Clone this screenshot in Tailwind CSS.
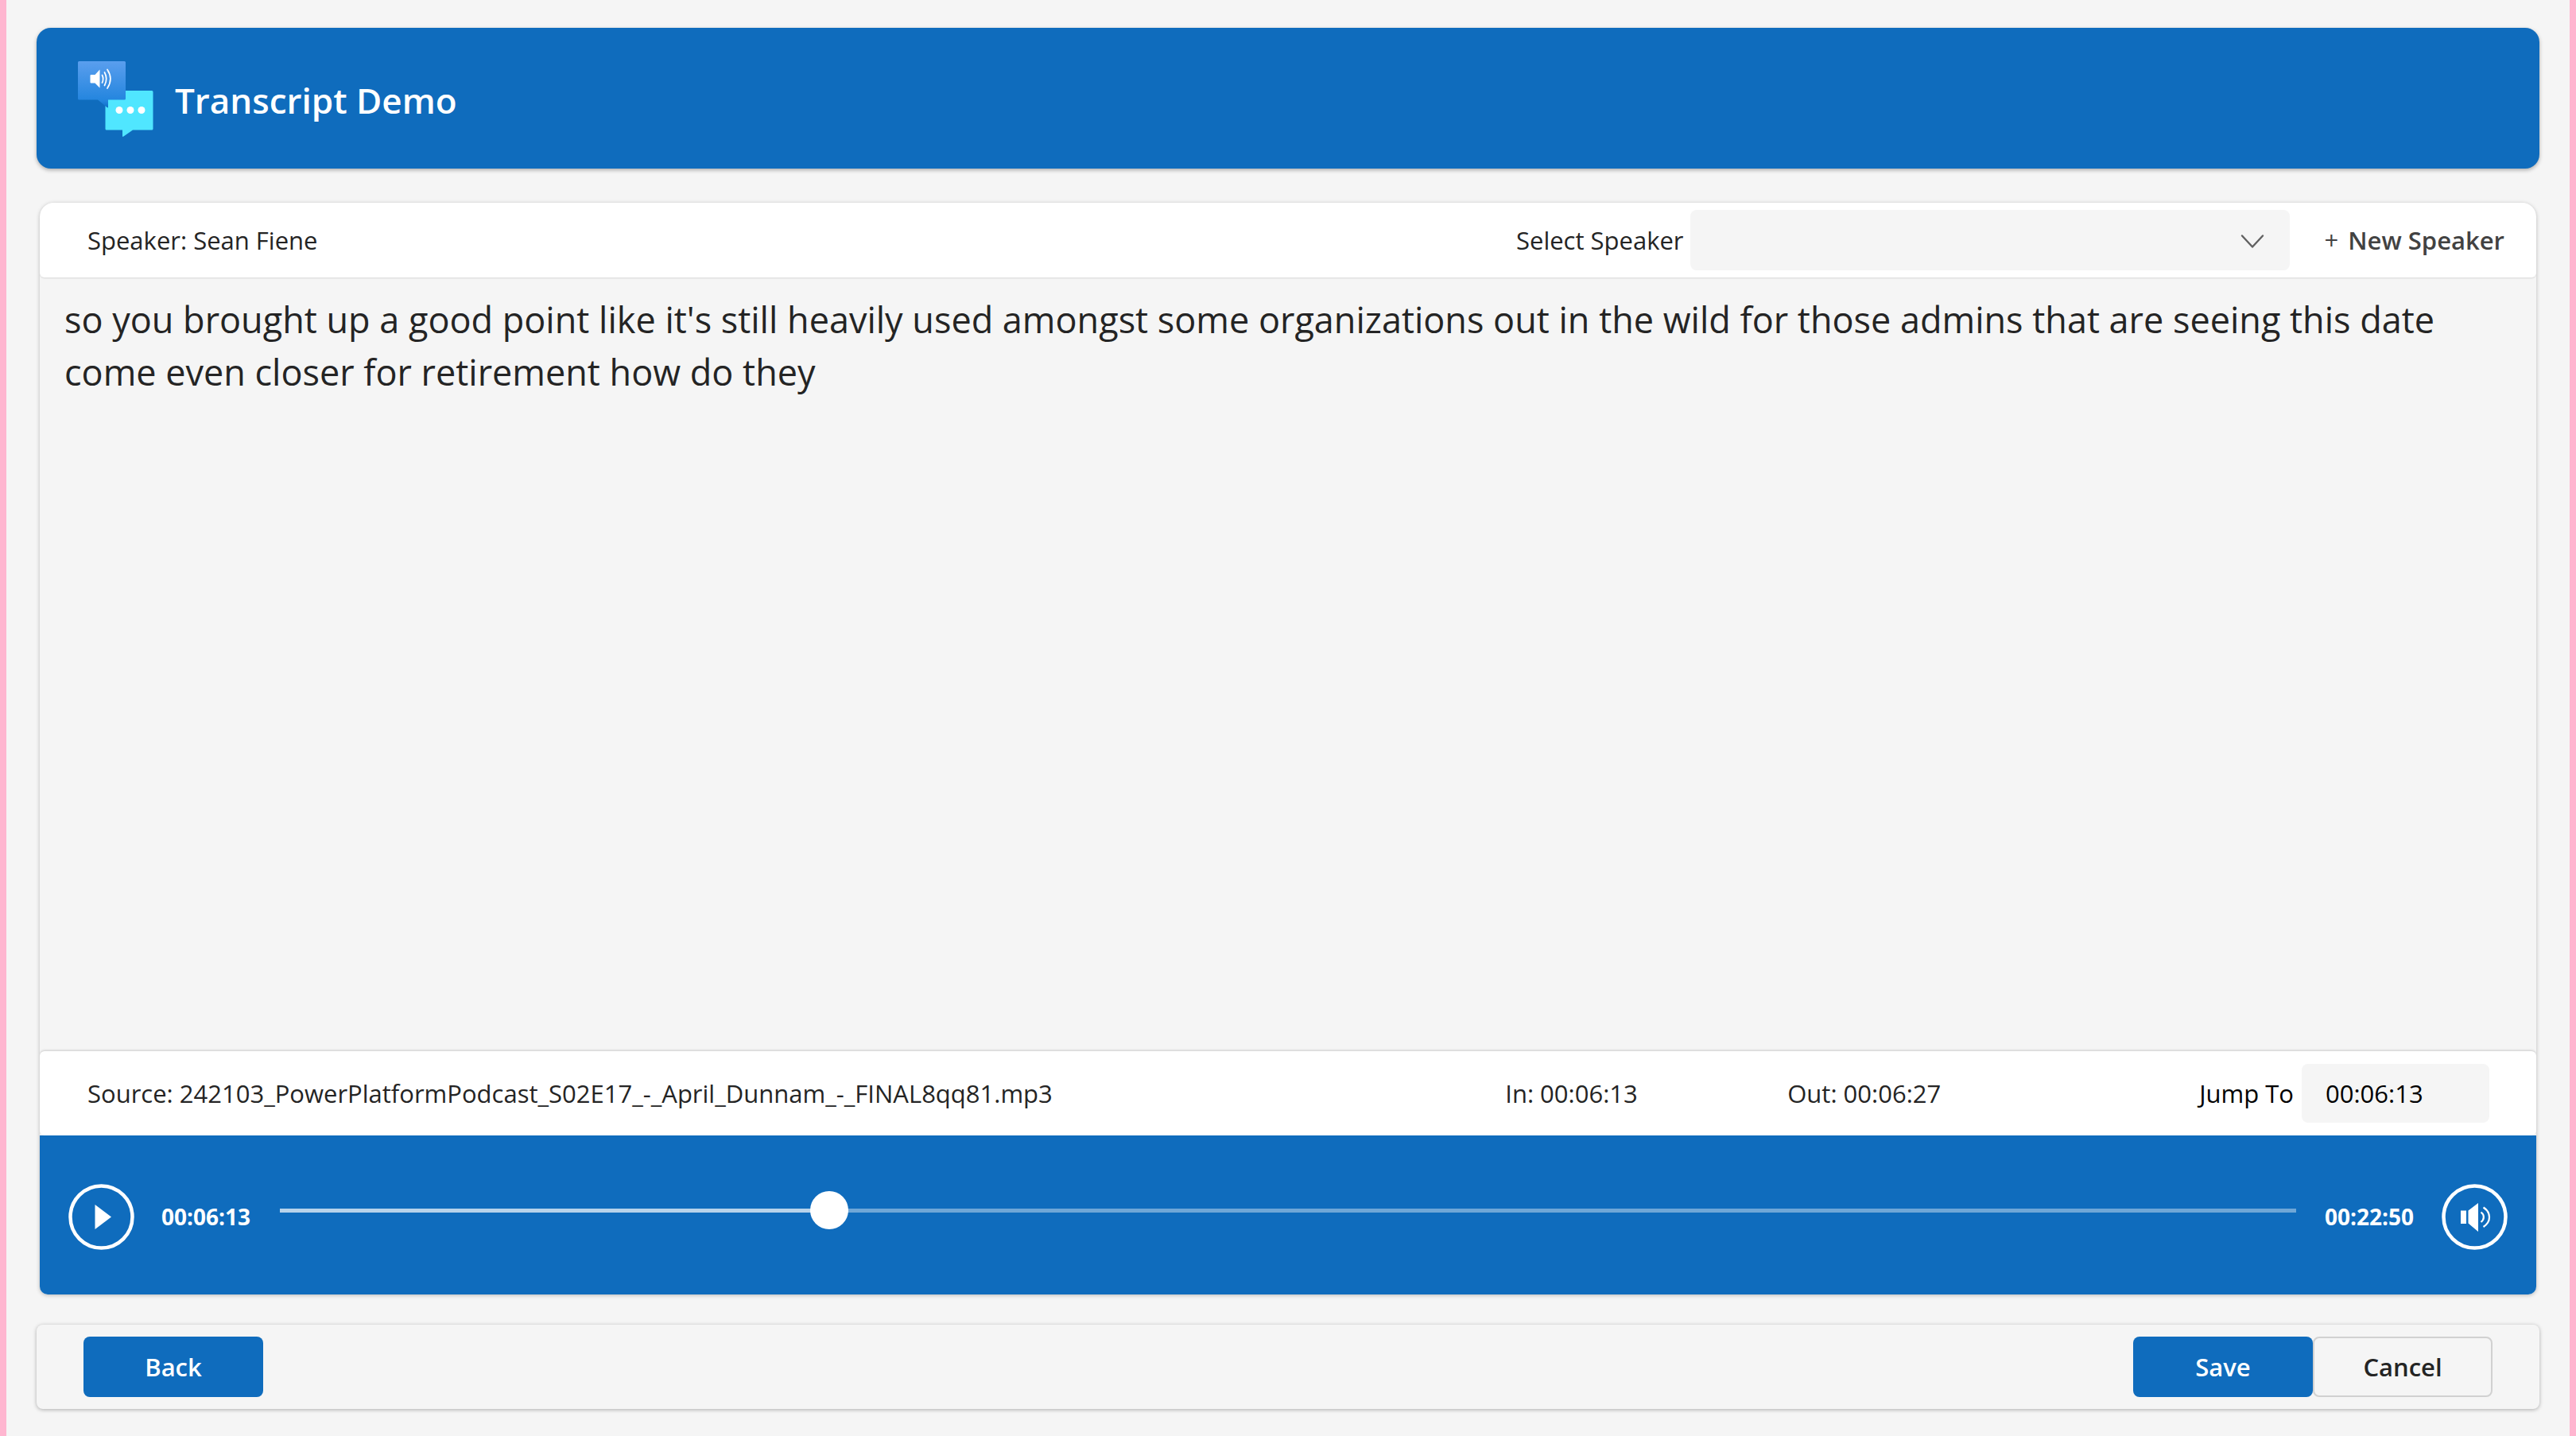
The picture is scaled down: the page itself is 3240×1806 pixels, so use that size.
<!DOCTYPE html>
<html lang="en">
<head>
<meta charset="utf-8">
<title>Transcript Demo</title>
<script src="https://cdn.jsdelivr.net/npm/@tailwindcss/browser@4"></script>
</head>
<body class="min-h-screen border-x-8 border-[#ffb6d0] bg-[#f5f5f5] font-['Open_Sans','Noto_Sans',sans-serif] text-[31px] leading-[40px] text-[#242424]">
<div class="flex min-h-screen flex-col px-[38px] pt-[35px] pb-[34px]">

  <header class="flex h-[177px] shrink-0 items-center gap-[26px] rounded-[18px] bg-[#0f6cbd] px-[52px] shadow-[0_2px_5px_rgba(0,0,0,0.3)]">
    <svg class="h-24 w-24 shrink-0" viewBox="0 0 96 96" aria-hidden="true">
      <defs>
        <linearGradient id="bubble" x1="0" y1="0" x2="0" y2="1">
          <stop offset="0" stop-color="#5a9eee"/>
          <stop offset="0.85" stop-color="#2385de"/>
          <stop offset="1" stop-color="#0f6fc8"/>
        </linearGradient>
      </defs>
      <path fill="#50e6ff" d="M36 38h57a1.500 1.500 0 0 1 1.500 1.500v46.500a1.500 1.500 0 0 1-1.500 1.500H69L57.500 95.500c-1 .8-1.500.5-1.500-.5v-7.500H36a1.500 1.500 0 0 1-1.500-1.500v-46.500a1.500 1.500 0 0 1 1.500-1.500z"/>
      <path fill="url(#bubble)" d="M1.500 1h57a1.500 1.500 0 0 1 1.500 1.500V48a1.500 1.500 0 0 1-1.500 1.500H38v9c0 1-.5 1.300-1.500.5L25 49.500H1.500A1.500 1.500 0 0 1 0 48V2.500A1.500 1.500 0 0 1 1.500 1z"/>
      <path fill="#fff" d="M16.500 18h5l6-6.500V34.500L21.500 28.500h-5a1 1 0 0 1-1-1V19a1 1 0 0 1 1-1z"/>
      <g fill="none" stroke="#fff" stroke-width="1.700" stroke-linecap="round">
        <path d="M30.500 18.500c1.500 3 1.500 6.500 0 9.500"/>
        <path d="M33.500 15c3 5.500 3 11 0 16.500"/>
        <path d="M37 11.500c5 7.500 5 16 0 23.500"/>
      </g>
      <circle cx="52" cy="62.500" r="4.500" fill="#fff"/>
      <circle cx="66" cy="62.500" r="4.500" fill="#fff"/>
      <circle cx="80" cy="62.500" r="4.500" fill="#fff"/>
    </svg>
    <h1 class="pt-1 text-[44px] leading-[60px] font-semibold text-white">Transcript Demo</h1>
  </header>

  <main class="mx-1 mt-[43px] flex flex-1 flex-col overflow-hidden rounded-t-[18px] rounded-b-[10px] shadow-[0_1px_5px_rgba(0,0,0,0.25)]">
    <section class="flex h-[94px] shrink-0 items-center rounded-b-md bg-white pr-10 pl-[60px] shadow-[0_1px_2px_rgba(0,0,0,0.12)]">
      <p class="flex-1">Speaker: Sean Fiene</p>
      <label for="speaker" class="mr-2">Select Speaker</label>
      <div class="relative w-[754px]">
        <select id="speaker" class="block h-[76px] w-full appearance-none rounded-lg bg-[#f5f5f5] px-7">
          <option></option>
          <option>Sean Fiene</option>
        </select>
        <svg class="pointer-events-none absolute top-[29px] right-8 h-5 w-[30px]" viewBox="0 0 30 20" fill="none" stroke="#616161" stroke-width="2.400" stroke-linecap="round" stroke-linejoin="round" aria-hidden="true"><path d="M2 3.500l13 14 13-14"/></svg>
      </div>
      <button type="button" class="ml-11 font-semibold text-[#424242]"><span class="mr-1 font-normal">+</span> New Speaker</button>
    </section>

    <section class="flex-1 px-[31px] pt-5 text-[45px] leading-[66px]">
      <p>so you brought up a good point like it's still heavily used amongst some organizations out in the wild for those admins that are seeing this date come even closer for retirement how do they</p>
    </section>

    <section class="flex h-[106px] shrink-0 items-center rounded-md bg-white pr-[59px] pl-[60px] shadow-[0_-1px_3px_rgba(0,0,0,0.18)]">
      <p class="flex-1">Source: 242103_PowerPlatformPodcast_S02E17_-_April_Dunnam_-_FINAL8qq81.mp3</p>
      <p class="w-[355px]">In: 00:06:13</p>
      <p class="w-[518px]">Out: 00:06:27</p>
      <label for="jump" class="mr-[10px] text-black">Jump To</label>
      <input id="jump" type="text" value="00:06:13" class="h-[74px] w-[236px] rounded-lg bg-[#f5f5f5] px-[30px] text-black">
    </section>

    <section class="flex h-[200px] shrink-0 items-center bg-[#0f6cbd] px-9 pt-1 text-[28px] font-bold text-white">
      <button type="button" aria-label="Play" class="shrink-0">
        <svg class="h-[83px] w-[83px]" viewBox="0 0 83 83" aria-hidden="true"><circle cx="41.500" cy="41.500" r="39" fill="none" stroke="#fff" stroke-width="4.500"/><path fill="#fff" d="M33.500 26v31l20.500-15.500z"/></svg>
      </button>
      <span class="ml-[34px] w-[149px]">00:06:13</span>
      <input type="range" aria-label="Position" min="0" max="1000" value="268" class="mb-4 h-12 min-w-0 flex-1 appearance-none bg-transparent [&::-webkit-slider-runnable-track]:h-[5px] [&::-webkit-slider-runnable-track]:bg-linear-to-r [&::-webkit-slider-runnable-track]:from-[#b7d3eb] [&::-webkit-slider-runnable-track]:from-27% [&::-webkit-slider-runnable-track]:to-[#6fa7d7] [&::-webkit-slider-runnable-track]:to-27% [&::-webkit-slider-thumb]:-mt-[22px] [&::-webkit-slider-thumb]:h-12 [&::-webkit-slider-thumb]:w-12 [&::-webkit-slider-thumb]:appearance-none [&::-webkit-slider-thumb]:rounded-full [&::-webkit-slider-thumb]:bg-white">
      <span class="ml-9 w-[147px]">00:22:50</span>
      <button type="button" aria-label="Volume" class="shrink-0">
        <svg class="h-[83px] w-[83px]" viewBox="0 0 83 83" aria-hidden="true"><circle cx="41.500" cy="41.500" r="39" fill="none" stroke="#fff" stroke-width="4.500"/><path fill="#fff" d="M24 33.500h7v16.500h-7zM33.500 33.500L46 24v36L33.500 49.500z"/><g fill="none" stroke="#fff" stroke-width="2.200"><path d="M49.500 35.500c4.500 3.500 4.500 9 0 12.500"/><path d="M52.500 29.500c10 6.500 10 18 0 24.500"/></g></svg>
      </button>
    </section>
  </main>

  <footer class="mt-[38px] flex h-[106px] shrink-0 items-center justify-between rounded-lg px-[59px] font-semibold shadow-[0_1px_5px_rgba(0,0,0,0.3)]">
    <button type="button" class="h-[76px] w-[226px] rounded-lg bg-[#0f6cbd] text-white">Back</button>
    <div class="flex">
      <button type="button" class="h-[76px] w-[226px] rounded-lg bg-[#0f6cbd] text-white">Save</button>
      <button type="button" class="h-[76px] w-[226px] rounded-lg border-2 border-[#d1d1d1]">Cancel</button>
    </div>
  </footer>
</div>
</body>
</html>
